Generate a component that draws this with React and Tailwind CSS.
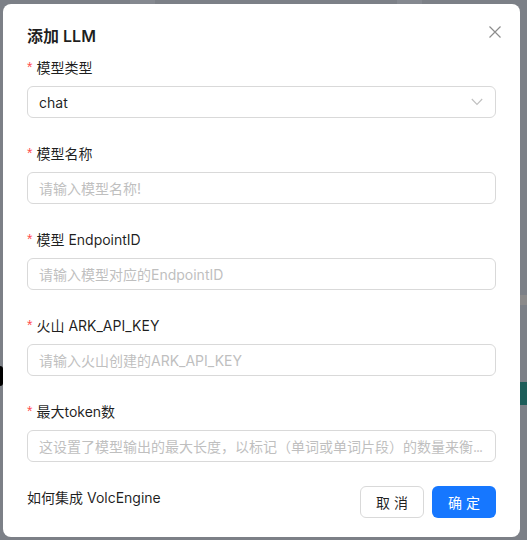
import React from "react";

const font = { fontFamily: 'Inter, "Noto Sans CJK SC", sans-serif' };

function Label({ children }) {
  return (
    <div className="flex items-center h-[22px] mb-2 text-[14px] text-[rgba(0,0,0,0.88)]">
      <span className="text-[#ff4d4f] mr-1 text-[14px] leading-none" style={{ fontFamily: "SimSun, sans-serif" }}>*</span>
      <span>{children}</span>
    </div>
  );
}

function Input({ children }) {
  return (
    <div className="h-[32px] border border-[#d9d9d9] rounded-[6px] px-[11px] flex items-center text-[14px] text-[#bfbfbf] overflow-hidden whitespace-nowrap">
      {children}
    </div>
  );
}

export default function App() {
  return (
    <div className="relative w-[527px] h-[540px] bg-[#7c8087] overflow-hidden" style={font}>
      <div className="absolute left-[130px] top-0 w-[25px] h-[4px] bg-[#858990]" />
      <div className="absolute left-[397px] top-0 w-[25px] h-[4px] bg-[#858990]" />
      <div className="absolute right-0 top-[295px] w-[7px] h-[10px] bg-[#8b8a8a]" />
      <div className="absolute right-0 top-[382px] w-[7px] h-[23px] bg-[#1d5d59]" />
      <div className="absolute left-0 top-[366px] w-[3px] h-[20px] bg-black rounded-r-full" />
      <div className="absolute left-[3px] top-[4px] w-[517px] h-[533px] bg-white rounded-[8px] px-6 pt-5 pb-5 flex flex-col">
        <div className="flex items-center justify-between h-[24px] mb-2">
          <div className="text-[16px] font-semibold text-[rgba(0,0,0,0.88)]">添加 LLM</div>
          <svg width="12" height="12" viewBox="0 0 12 12" className="mr-[-5px] mt-[-9px]">
            <path d="M0.5 0.5L11.5 11.5M11.5 0.5L0.5 11.5" stroke="rgba(0,0,0,0.45)" strokeWidth="1.2" fill="none" />
          </svg>
        </div>
        <div className="flex flex-col">
          <div className="mb-6">
            <Label>模型类型</Label>
            <div className="h-[32px] border border-[#d9d9d9] rounded-[6px] px-[11px] flex items-center justify-between text-[14px] text-[rgba(0,0,0,0.88)]">
              <span>chat</span>
              <svg width="12" height="8" viewBox="0 0 12 8" className="mr-[1px]">
                <path d="M0.8 1L6 6.5L11.2 1" stroke="#c0c0c0" strokeWidth="1.1" fill="none" />
              </svg>
            </div>
          </div>
          <div className="mb-6">
            <Label>模型名称</Label>
            <Input>请输入模型名称!</Input>
          </div>
          <div className="mb-6">
            <Label>模型 EndpointID</Label>
            <Input>请输入模型对应的EndpointID</Input>
          </div>
          <div className="mb-6">
            <Label>火山 ARK_API_KEY</Label>
            <Input>请输入火山创建的ARK_API_KEY</Input>
          </div>
          <div className="mb-6">
            <Label>最大token数</Label>
            <Input>
              <span>这设置了模型输出的最大长度，以标记（单词或单词片段）的数量来衡</span>
              <span className="tracking-[-1px]">...</span>
            </Input>
          </div>
        </div>
        <div className="flex items-center justify-between h-[32px]">
          <div className="text-[14px] text-[rgba(0,0,0,0.88)] mt-[-10px]">如何集成 VolcEngine</div>
          <div className="flex gap-2">
            <div className="h-[32px] w-[64px] flex items-center justify-center border border-[#d9d9d9] rounded-[6px] text-[14px] text-[rgba(0,0,0,0.88)]">取 消</div>
            <div className="h-[32px] w-[64px] flex items-center justify-center rounded-[6px] bg-[#1677ff] text-white text-[14px]">确 定</div>
          </div>
        </div>
      </div>
    </div>
  );
}
